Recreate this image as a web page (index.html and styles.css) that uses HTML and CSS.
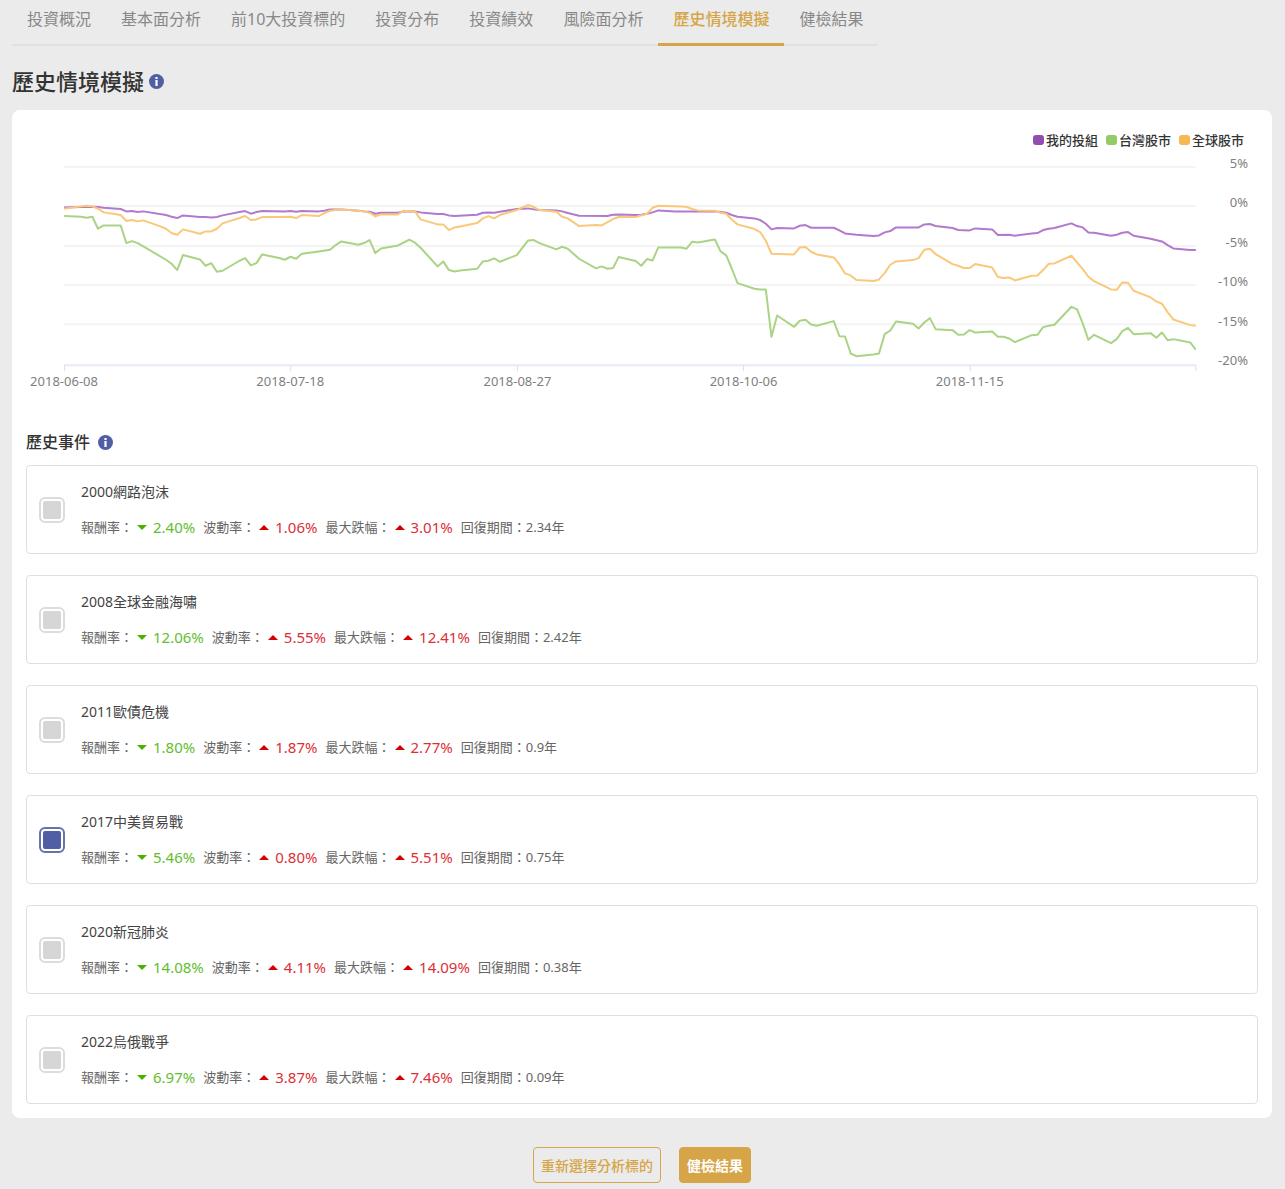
FILE: index.html
```html
<!DOCTYPE html>
<html lang="zh-Hant">
<head>
  <meta charset="UTF-8">
  <meta name="viewport" content="width=device-width, initial-scale=1.0">
  <title>歷史情境模擬</title>
  <link rel="stylesheet" href="styles.css">
</head>
<body>
  <nav class="tabs">
    <a href="#">投資概況</a>
    <a href="#">基本面分析</a>
    <a href="#">前10大投資標的</a>
    <a href="#">投資分布</a>
    <a href="#">投資績效</a>
    <a href="#">風險面分析</a>
    <a href="#" class="active" aria-current="page">歷史情境模擬</a>
    <a href="#">健檢結果</a>
  </nav>

  <div class="heading">
    <h1>歷史情境模擬</h1>
    <button type="button" class="info" aria-label="說明">
      <svg viewBox="0 0 15 15"><circle cx="7.5" cy="7.5" r="7.5"/><path d="M6.4 3h2.2v2H6.4zM6.4 6h2.2v6H6.4z"/></svg>
    </button>
  </div>

  <main class="card">
    <div class="legend">
      <span><i class="swatch mine"></i>我的投組</span>
      <span><i class="swatch taiwan"></i>台灣股市</span>
      <span><i class="swatch global"></i>全球股市</span>
    </div>

    <svg class="chart" viewBox="0 0 1231 250" role="img" aria-label="歷史情境模擬">
      <path class="grid" d="M38 17h1131M38 56h1131M38 96h1131M38 135h1131M38 174h1131"/>
      <path class="axis" d="M38 215h1131"/>
      <path class="tick" d="M38.5 215v6M264.5 215v6M491 215v6M717 215v6M943.5 215v6M1169 215v6"/>
      <!-- x: days since 2018-06-08 -->
      <svg x="38" y="17" width="1131" height="198" viewBox="0 -71 200 594" preserveAspectRatio="none">
        <polyline class="line mine" points="0,50 3,49 4,49 5,48 6,49 7,51 10,55 11,62 12,61 13,64 14,62 18,73 19,78 20,82 21,74 24,79 25,79 26,80 27,79 28,74 31,64 32,61 33,69 34,64 35,61 39,62 40,61 41,63 42,61 45,62 46,60 47,56 49,56 52,60 53,62 54,63 55,69 56,66 59,66 60,62 62,62 63,65 66,70 67,70 68,74 69,76 73,72 74,66 75,65 76,66 77,63 80,55 82,53 83,56 84,58 87,59 88,62 89,67 91,75 96,76 97,72 98,71 101,73 102,72 103,69 104,65 105,59 108,62 115,62 116,64 117,66 118,73 119,78 122,83 123,88 124,99 125,116 126,112 129,113 130,105 131,103 132,111 136,111 137,119 138,128 140,132 143,136 144,134 145,125 146,121 147,110 151,110 152,101 153,100 154,106 157,112 158,118 160,119 161,113 164,116 165,133 167,132 168,135 171,128 172,127 173,118 174,114 175,112 178,98 179,106 180,110 181,125 182,126 185,135 186,132 187,126 188,124 189,135 192,144 194,152 195,163 196,173 199,178 200,178"/>
        <polyline class="line taiwan" points="0,76 3,78 4,81 5,78 6,114 7,104 10,104 11,157 12,151 13,157 14,167 18,207 19,219 20,238 21,193 24,206 25,225 26,217 27,243 28,240 31,210 32,202 33,224 34,217 35,191 38,202 39,207 40,198 41,204 42,189 45,182 47,177 48,163 49,152 52,162 53,157 54,148 55,187 56,173 59,164 61,147 62,156 63,171 66,227 67,212 68,238 69,242 70,239 73,234 74,212 75,210 76,203 77,213 80,193 82,149 83,148 84,157 87,176 88,168 89,174 91,204 94,233 95,227 96,234 97,232 98,199 101,211 102,225 103,205 104,209 105,170 109,170 110,174 111,153 112,155 115,146 116,182 117,194 118,234 119,277 122,294 123,296 124,296 125,438 126,374 129,408 130,390 131,387 132,401 133,405 136,391 137,436 138,437 139,488 140,496 143,491 144,488 145,430 146,419 147,392 150,399 151,413 152,395 153,382 154,415 157,418 158,432 159,431 160,418 161,425 164,422 165,438 166,438 167,443 168,454 171,433 172,432 173,409 174,405 175,402 178,348 179,356 180,398 181,447 182,432 185,457 186,445 187,421 188,411 189,430 192,427 193,441 194,425 195,448 196,445 199,455 200,477"/>
        <polyline class="line global" points="0,54 3,47 4,45 5,47 6,54 7,65 10,73 11,91 12,88 13,92 14,89 17,107 18,114 19,127 20,132 21,116 24,129 25,122 26,122 27,114 28,98 31,82 32,76 33,88 34,86 35,79 38,79 40,78 41,82 42,73 45,76 46,67 47,60 48,58 49,56 52,60 53,62 54,66 55,77 56,71 59,71 60,60 62,62 63,86 66,101 67,101 68,118 69,110 70,107 73,97 74,83 75,76 76,83 77,73 80,58 81,50 82,43 83,49 84,58 87,63 88,78 89,83 91,106 94,103 95,104 97,85 98,79 101,79 103,69 104,51 105,45 109,47 110,49 111,55 112,59 115,60 116,66 117,69 118,87 119,101 122,115 123,124 124,150 125,189 129,191 130,170 131,169 132,183 133,191 136,200 137,221 138,248 139,254 140,268 143,271 144,266 145,247 146,222 147,212 150,208 151,202 152,177 153,174 154,190 157,220 158,225 159,232 160,232 161,220 164,230 165,259 166,262 167,260 168,269 171,255 172,254 173,238 174,219 175,218 178,195 179,215 180,235 181,258 182,271 185,296 186,297 187,275 188,276 189,300 192,320 193,332 194,339 195,364 196,386 199,403 200,405"/>
      </svg>
      <g class="labels-y">
        <text x="1221" y="18">5%</text>
        <text x="1221" y="57">0%</text>
        <text x="1221" y="97">-5%</text>
        <text x="1221" y="136">-10%</text>
        <text x="1221" y="176">-15%</text>
        <text x="1221" y="215">-20%</text>
      </g>
      <g class="labels-x">
        <text x="38" y="236">2018-06-08</text>
        <text x="264" y="236">2018-07-18</text>
        <text x="491" y="236">2018-08-27</text>
        <text x="717" y="236">2018-10-06</text>
        <text x="943" y="236">2018-11-15</text>
      </g>
    </svg>

    <div class="subheading">
      <h2>歷史事件</h2>
      <button type="button" class="info" aria-label="說明">
        <svg viewBox="0 0 15 15"><circle cx="7.5" cy="7.5" r="7.5"/><path d="M6.4 3h2.2v2H6.4zM6.4 6h2.2v6H6.4z"/></svg>
      </button>
    </div>

    <div class="events">
      <label class="event">
        <input type="checkbox">
        <span class="detail">
          <span class="name">2000網路泡沫</span>
          <span class="stats">
            <span class="stat down">報酬率：<b>2.40%</b></span>
            <span class="stat up">波動率：<b>1.06%</b></span>
            <span class="stat up">最大跌幅：<b>3.01%</b></span>
            <span class="stat">回復期間：2.34年</span>
          </span>
        </span>
      </label>
      <label class="event">
        <input type="checkbox">
        <span class="detail">
          <span class="name">2008全球金融海嘯</span>
          <span class="stats">
            <span class="stat down">報酬率：<b>12.06%</b></span>
            <span class="stat up">波動率：<b>5.55%</b></span>
            <span class="stat up">最大跌幅：<b>12.41%</b></span>
            <span class="stat">回復期間：2.42年</span>
          </span>
        </span>
      </label>
      <label class="event">
        <input type="checkbox">
        <span class="detail">
          <span class="name">2011歐債危機</span>
          <span class="stats">
            <span class="stat down">報酬率：<b>1.80%</b></span>
            <span class="stat up">波動率：<b>1.87%</b></span>
            <span class="stat up">最大跌幅：<b>2.77%</b></span>
            <span class="stat">回復期間：0.9年</span>
          </span>
        </span>
      </label>
      <label class="event">
        <input type="checkbox" checked>
        <span class="detail">
          <span class="name">2017中美貿易戰</span>
          <span class="stats">
            <span class="stat down">報酬率：<b>5.46%</b></span>
            <span class="stat up">波動率：<b>0.80%</b></span>
            <span class="stat up">最大跌幅：<b>5.51%</b></span>
            <span class="stat">回復期間：0.75年</span>
          </span>
        </span>
      </label>
      <label class="event">
        <input type="checkbox">
        <span class="detail">
          <span class="name">2020新冠肺炎</span>
          <span class="stats">
            <span class="stat down">報酬率：<b>14.08%</b></span>
            <span class="stat up">波動率：<b>4.11%</b></span>
            <span class="stat up">最大跌幅：<b>14.09%</b></span>
            <span class="stat">回復期間：0.38年</span>
          </span>
        </span>
      </label>
      <label class="event">
        <input type="checkbox">
        <span class="detail">
          <span class="name">2022烏俄戰爭</span>
          <span class="stats">
            <span class="stat down">報酬率：<b>6.97%</b></span>
            <span class="stat up">波動率：<b>3.87%</b></span>
            <span class="stat up">最大跌幅：<b>7.46%</b></span>
            <span class="stat">回復期間：0.09年</span>
          </span>
        </span>
      </label>
    </div>
  </main>

  <div class="actions">
    <button type="button" class="btn outline">重新選擇分析標的</button>
    <button type="button" class="btn">健檢結果</button>
  </div>
</body>
</html>
```

FILE: styles.css
```css
* {
  box-sizing: border-box;
}
body {
  margin: 0;
  padding: 0 13px 6px 12px;
  background: #ebebeb;
  color: #666;
  font-family: "Noto Sans", "Noto Sans CJK TC", sans-serif;
  font-size: 13px;
}
h1, h2 {
  margin: 0;
  color: #333;
  font-weight: 500;
}
h1 {
  font-size: 22px;
  line-height: 30px;
}
h2 {
  font-size: 16px;
  line-height: 24px;
}
.tabs {
  display: flex;
  width: fit-content;
  height: 46px;
  border-bottom: 2px solid #e1e1e1;
}
.tabs a {
  height: 46px;
  padding: 7px 15px 0;
  color: #888;
  font-size: 16px;
  line-height: 24px;
  text-decoration: none;
  white-space: nowrap;
}
.tabs a.active {
  color: #d6a547;
  font-weight: 500;
  border-bottom: 3px solid #d6a547;
}
.heading, .subheading {
  display: flex;
  align-items: center;
}
.heading {
  gap: 5px;
  padding: 20px 0 14px;
}
.subheading {
  gap: 8px;
  padding: 30px 0 11px;
}
.info {
  width: 15px;
  height: 15px;
  padding: 0;
  border: none;
  background: none;
  cursor: pointer;
}
.info svg {
  display: block;
}
.info circle {
  fill: #505fa3;
}
.info path {
  fill: #fff;
}
.card {
  padding: 20px 14px 14px;
  border-radius: 8px;
  background: #fff;
}
.legend {
  display: flex;
  justify-content: flex-end;
  gap: 8px;
  padding-right: 14px;
  color: #333;
  font-weight: 500;
  line-height: 20px;
}
.legend span {
  display: flex;
  align-items: center;
  gap: 2px;
}
.swatch {
  width: 11px;
  height: 10px;
  border-radius: 3px;
}
.swatch.mine { background: #924db0; }
.swatch.taiwan { background: #96c967; }
.swatch.global { background: #f6b851; }

.chart {
  display: block;
  width: 100%;
}
.grid, .axis, .tick, .line {
  fill: none;
}
.grid {
  stroke: #f4f4f4;
  stroke-width: 2;
}
.axis {
  stroke: #e6eaf6;
  stroke-width: 2;
}
.tick {
  stroke: #d9dff0;
}
.line {
  stroke-width: 2;
  stroke-linejoin: round;
  vector-effect: non-scaling-stroke;
}
.line.mine { stroke: #b379cc; }
.line.taiwan { stroke: #abd386; }
.line.global { stroke: #f9c878; }

.chart text {
  fill: #808080;
  font-size: 13px;
}
.labels-y {
  text-anchor: end;
}
.labels-x {
  text-anchor: middle;
}
.events {
  display: grid;
  gap: 21px;
}
.event {
  display: flex;
  align-items: center;
  gap: 16px;
  padding: 14px 12px;
  border: 1px solid #dfdfdf;
  border-radius: 4px;
  cursor: pointer;
}
.event input {
  appearance: none;
  flex: none;
  width: 26px;
  height: 26px;
  margin: 0;
  padding: 2px;
  border: 2px solid #dcdcdc;
  border-radius: 6px;
}
.event input::before {
  content: "";
  display: block;
  height: 100%;
  border-radius: 2px;
  background: #d6d6d6;
}
.event input:checked {
  border-color: #6573b0;
}
.event input:checked::before {
  background: #505fa3;
}
.detail {
  display: grid;
  gap: 12px;
  padding-bottom: 1px;
}
.name {
  color: #444;
  font-size: 14px;
  line-height: 24px;
}
.stats {
  display: flex;
  flex-wrap: wrap;
  gap: 8px;
}
.stat {
  display: flex;
  align-items: center;
  line-height: 22px;
}
.stat b {
  display: flex;
  align-items: center;
  gap: 6px;
  margin-left: 4px;
  font-size: 15px;
  font-weight: 400;
}
.stat b::before {
  content: "";
  border: 5px solid transparent;
}
.down b { color: #64bd2f; }
.up b { color: #dc3038; }
.down b::before {
  border-top-color: #4db000;
  border-bottom: none;
}
.up b::before {
  border-bottom-color: #d40000;
  border-top: none;
}
.actions {
  display: flex;
  justify-content: center;
  gap: 18px;
  padding-top: 29px;
}
.btn {
  height: 36px;
  padding: 0 7px;
  border: 1px solid #d6a547;
  border-radius: 4px;
  background: #d6a547;
  color: #fff;
  font-family: inherit;
  font-size: 14px;
  font-weight: 700;
  cursor: pointer;
}
.btn.outline {
  background: none;
  color: #d6a547;
  font-weight: 500;
}
```
